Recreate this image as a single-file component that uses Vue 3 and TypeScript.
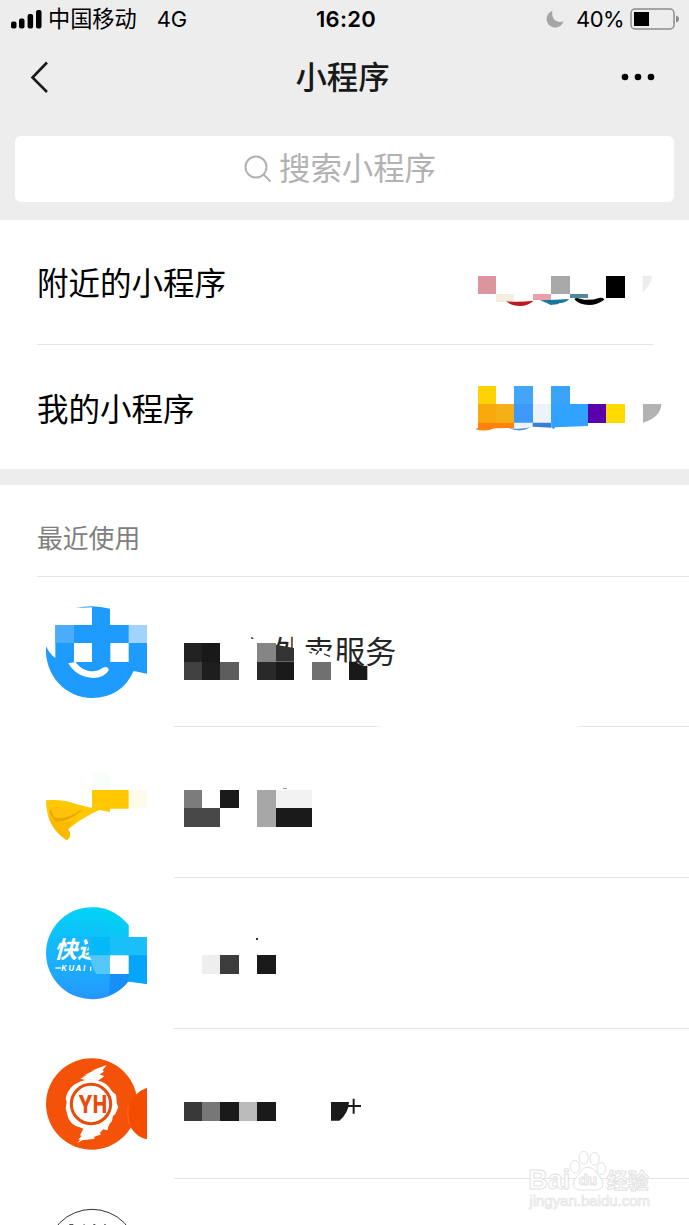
<script setup lang="ts">
type Cell = [x: number, y: number, w: number, h: number, fill: string]

interface RecentApp {
  id: string
  height: number
  iconTop: number
  titleLeft: number
  titleTop: number
  cells: Cell[]
}

// Drawings use three units per pixel.
const nearbyCells: Cell[] = [
  [54, 47, 54, 55, '#dc949f'],
  [108, 102, 55, 23, '#f3eee0'],
  [219, 102, 54, 19, '#eaa0ab'],
  [273, 47, 56, 55, '#a8a8a8'],
  [329, 102, 55, 13, '#4d8b9b'],
  [438, 47, 56, 67, '#000000'],
]

const mineCells: Cell[] = [
  [54, 47, 54, 55, '#ffd303'],
  [54, 102, 54, 56, '#f9a90c'],
  [108, 102, 55, 56, '#f4b016'],
  [163, 47, 55, 55, '#42a5fa'],
  [163, 102, 55, 56, '#3f99fa'],
  [218, 102, 56, 56, '#ecf3fd'],
  [274, 47, 55, 56, '#39a2fb'],
  [274, 102, 110, 56, '#2fa3ff'],
  [384, 102, 55, 56, '#5b00ad'],
  [439, 102, 55, 56, '#ffdb00'],
]

const recentApps: RecentApp[] = [
  {
    id: 'delivery',
    height: 150,
    iconTop: -54,
    titleLeft: 12,
    titleTop: -129,
    cells: [
      [42, 69, 54, 56, '#222222'],
      [96, 69, 54, 56, '#191919'],
      [42, 125, 54, 55, '#414141'],
      [96, 125, 54, 55, '#1e1e1e'],
      [150, 125, 57, 55, '#5d5d5d'],
      [261, 69, 57, 56, '#858585'],
      [261, 125, 57, 55, '#292929'],
      [318, 125, 54, 55, '#1a1a1a'],
      [427, 125, 56, 55, '#707070'],
    ],
  },
  {
    id: 'yellow',
    height: 151,
    iconTop: -99,
    titleLeft: 432,
    titleTop: -99,
    cells: [
      [461, 90, 55, 55, '#7b7b7b'],
      [571, 90, 56, 55, '#1a1a1a'],
      [461, 145, 110, 56, '#484848'],
      [681, 90, 56, 111, '#a7a7a7'],
      [737, 90, 110, 55, '#f2f2f2'],
      [737, 145, 110, 56, '#1a1a1a'],
      [760, 83, 10, 3, '#a0a0a0'],
    ],
  },
  {
    id: 'express',
    height: 151,
    iconTop: -51,
    titleLeft: 432,
    titleTop: -51,
    cells: [
      [516, 181, 55, 56, '#eeeeee'],
      [571, 181, 56, 56, '#3c3c3c'],
      [681, 181, 57, 56, '#1a1a1a'],
      [677, 129, 7, 6, '#333333'],
      [634, 131, 5, 2, '#bbbbbb'],
    ],
  },
  {
    id: 'yh',
    height: 150,
    iconTop: -48,
    titleLeft: 12,
    titleTop: -153,
    cells: [
      [42, 66, 54, 56, '#393939'],
      [96, 66, 54, 56, '#777777'],
      [150, 66, 57, 56, '#1a1a1a'],
      [207, 66, 54, 56, '#bbbbbb'],
      [261, 66, 57, 56, '#1a1a1a'],
    ],
  },
  { id: 'outline', height: 46, iconTop: 402, titleLeft: 12, titleTop: 0, cells: [] },
]
</script>

<template>
  <main class="screen">
    <header class="top">
      <div class="status">
        <div class="status-left">
          <svg class="signal" width="31" height="19" viewBox="0 0 31 19">
            <rect x="0" y="11.500" width="5.500" height="7" rx="2" />
            <rect x="8" y="8.500" width="5.500" height="10" rx="2" />
            <rect x="16.600" y="4" width="5.500" height="14.500" rx="2" />
            <rect x="25" y="0" width="5.500" height="18.500" rx="2" />
          </svg>
          <span class="carrier">中国移动</span>
          <span class="network">4G</span>
        </div>
        <span class="clock">16:20</span>
        <div class="status-right">
          <svg class="moon" width="18" height="18" viewBox="0 0 18 18">
            <path d="M6.500 .8A8.600 8.600 0 1 0 17.500 11.200C12 14 4.500 9.500 6.500 .8Z" fill="#a5a5a5" />
          </svg>
          <span class="percent">40%</span>
          <svg class="battery" width="50" height="22" viewBox="0 0 50 22">
            <rect x="1" y="1" width="43" height="20" rx="4" fill="none" stroke="#8c8c8c" stroke-width="1.500" />
            <rect x="4" y="4" width="15" height="14" />
            <path d="M46 7.500Q49 8.500 49 11T46 14.500Z" fill="#8c8c8c" />
          </svg>
        </div>
      </div>
      <nav class="nav">
        <svg class="back" width="20" height="34" viewBox="0 0 20 34">
          <path d="M18 2.500L3.500 17.500l14.500 14.500" fill="none" stroke="#191919" stroke-width="2.600" />
        </svg>
        <h1>小程序</h1>
        <svg class="more" width="34" height="8" viewBox="0 0 34 8">
          <circle cx="4" cy="4" r="3.300" />
          <circle cx="17" cy="4" r="3.300" />
          <circle cx="30" cy="4" r="3.300" />
        </svg>
      </nav>
      <div class="search">
        <svg width="28" height="28" viewBox="0 0 28 28" fill="none" stroke="#b2b2b2" stroke-width="2">
          <circle cx="12" cy="12" r="10.500" />
          <path d="M19.500 19.500L26.500 26.500" />
        </svg>
        <span>搜索小程序</span>
      </div>
    </header>

    <section class="shortcuts">
      <div class="shortcut nearby">
        <span>附近的小程序</span>
        <svg width="229" height="126" viewBox="0 -120 687 378">
          <g shape-rendering="crispEdges">
            <rect v-for="(c, i) in nearbyCells" :key="i" :x="c[0]" :y="c[1]" :width="c[2]" :height="c[3]" :fill="c[4]" />
          </g>
          <path d="M138 124Q180 127 221 122Q203 138 180 138Q156 138 138 124Z" fill="#bf1824" />
          <path d="M240 121Q286 119 328 117Q314 130 300 129L291 133L272 135L262 130Z" fill="#19779c" />
          <path d="M343 118Q348 111 360 116Q387 124 417 114Q430 111 433 119Q411 135 387 135Q358 135 343 118Z" />
          <path d="M548 47H576Q572 75 548 97Z" fill="#ececec" />
        </svg>
      </div>
      <div class="shortcut mine">
        <span>我的小程序</span>
        <svg width="229" height="123" viewBox="0 -72 687 369">
          <g shape-rendering="crispEdges">
            <rect v-for="(c, i) in mineCells" :key="i" :x="c[0]" :y="c[1]" :width="c[2]" :height="c[3]" :fill="c[4]" />
          </g>
          <path d="M54 158H163V174L105 175Q75 187 46 178L54 173Z" fill="#ff830b" />
          <path d="M145 174Q177 180 213 171Q180 190 145 174Z" fill="#5793dc" />
          <path d="M163 158H218V171L163 173Z" fill="#edf6ff" />
          <path d="M218 158H274V173L218 170Z" fill="#3b7ed6" />
          <path d="M274 158H384V168L286 172L281 178L274 172Z" fill="#2fa3ff" />
          <path d="M549 102H604Q602 142 549 158Z" fill="#b2b2b2" />
        </svg>
      </div>
    </section>

    <section class="recent">
      <h2>最近使用</h2>
      <div v-for="app in recentApps" :key="app.id" class="app" :class="app.id" :style="{ height: app.height + 'px' }">
        <svg class="icon" width="174" :height="app.height" :viewBox="`-90 ${app.iconTop} 522 ${app.height * 3}`">
          <g v-if="app.id === 'delivery'">
            <path d="M138 39Q188 27 240 41V90H351V236L311 228Q275 308 186 309C107 309 43 242 48 154Q58 176 76 189V90H186V37Z" fill="#1d9bff" />
            <rect x="76" y="90" width="56" height="54" fill="#4bacfb" />
            <rect x="296" y="90" width="55" height="54" fill="#a0d3fd" />
            <rect x="132" y="144" width="54" height="57" fill="#fff" />
            <rect x="241" y="144" width="55" height="57" fill="#fff" />
            <path d="M115 205L137 201Q150 222 177 228Q200 232 217 219Q235 211 236 226Q225 247 191 249Q139 247 115 205Z" fill="#fff" />
            <path d="M142 204L186 201V212Q158 217 142 204Z" fill="#1d9bff" />
          </g>
          <g v-else-if="app.id === 'yellow'">
            <rect x="188" y="37" width="51" height="53" fill="#fafefb" />
            <rect x="296" y="90" width="55" height="55" fill="#fffbea" />
            <path d="M48 121Q95 116 138 132L186 144V90H296V146H240V156L208 150Q154 174 115 208L120 218L119 232L110 241Q49 203 48 121Z" fill="#ffc800" />
            <path d="M58 154Q70 136 100 147Q130 158 157 150Q117 185 80 186Q64 178 58 154Z" fill="#efa500" />
            <path d="M62 149Q79 138 107 145Q135 151 151 151Q101 185 72 170Z" fill="#ffc20a" />
            <path d="M52 160Q64 208 110 241L119 232L120 218L113 207Q121 192 140 177Q112 190 80 186Q62 180 52 160Z" fill="#fbb900" />
          </g>
          <g v-else-if="app.id === 'express'">
            <defs>
              <linearGradient id="expressBlue" x1="0" y1="0" x2="0" y2="1">
                <stop offset="0" stop-color="#00d2f7" />
                <stop offset=".55" stop-color="#1bb5fd" />
                <stop offset="1" stop-color="#2795ff" />
              </linearGradient>
              <clipPath id="expressName">
                <path d="M60 120H176V184L186 196H60Z" />
              </clipPath>
            </defs>
            <path d="M296 91A138 138 0 1 0 296 258L351 267V126H296Z" fill="url(#expressBlue)" />
            <path d="M48 169Q52 133 75 128Q130 114 186 128V181H240V292A138 138 0 0 1 48 169Z" fill="#16a9fc" opacity=".22" />
            <path d="M200 36Q255 43 296 91V126H240V84Q204 90 200 36Z" fill="#00d5ee" opacity=".35" />
            <rect x="186" y="126" width="54" height="55" fill="#05b8f8" />
            <rect x="240" y="126" width="111" height="55" fill="#1abff9" />
            <path d="M296 181H351V267L240 253V237H296Z" fill="#05a5fc" />
            <path d="M240 237H296V258Q270 292 235 301Q240 280 240 237Z" fill="#168ff7" />
            <path d="M172 181H240V237H199Q190 226 186 207Z" fill="#54c7fb" />
            <rect x="240" y="181" width="56" height="56" fill="#fff" />
            <g clip-path="url(#expressName)">
              <text transform="translate(71 188) skewX(-16)" class="express-name">快递</text>
            </g>
            <path d="M76 219H93" stroke="#fff" stroke-width="4" />
            <text x="94" y="228" class="kuai">KUAI</text>
            <path d="M182 215V228" stroke="#fff" stroke-width="4" />
          </g>
          <g v-else-if="app.id === 'yh'">
            <circle cx="185" cy="177" r="137" fill="#f35208" />
            <path d="M351 128V283Q322 278 304 250Q289 221 292 188Q313 141 351 128Z" fill="#f44d00" />
            <path d="M295 180Q290 215 299 238" fill="none" stroke="#ff7844" stroke-width="2" />
            <path d="M151 101L174 88L159 92L196 74L183 77L230 60L218 75L222 80L209 88L223 94L204 107Q232 112 246 139L258 149L261 177L265 187L256 207L249 213L246 228Q234 239 233 256L220 253L209 264L214 268L191 276L195 281L157 286L141 295L151 284L145 284L155 272L150 271L160 251L149 247Q117 238 112 209L107 190L110 171L107 159Q115 124 149 110L165 105Z" fill="#fff" />
            <circle cx="183" cy="177" r="59" fill="#fff" stroke="#e94b0b" stroke-width="9" />
            <text x="188" y="205" text-anchor="middle" textLength="86" lengthAdjust="spacingAndGlyphs" class="yh-mark">YH</text>
          </g>
          <g v-else fill="none" stroke="#333" stroke-width="3">
            <circle cx="186" cy="629" r="136" />
            <path d="M118 539H130M160 540H165M190 539H196M223 538L229 541" stroke-width="3" />
          </g>
        </svg>
        <div class="title">
          <svg width="515" :height="app.height" :viewBox="`${app.titleLeft} ${app.titleTop} 1545 ${app.height * 3}`">
            <g v-if="app.id === 'delivery'">
              <text x="307" y="130" class="service">外卖服务</text>
              <path d="M295 40H316V138H295ZM368 40H400V138H368ZM318 90H400V145H318ZM400 93H495V145H400ZM495 120L537 130V145H495Z" fill="#fff" />
              <path d="M418 96L426 99M446 93L438 104M462 102L480 109" stroke="#252525" stroke-width="4" />
              <path d="M318 74L372 84V125H318Z" fill="#333" />
              <path d="M537 125H555L578 138L592 137V180H537Z" fill="#191919" />
              <path d="M243 53L250 56" stroke="#333" stroke-width="4" />
            </g>
            <g shape-rendering="crispEdges">
              <rect v-for="(c, i) in app.cells" :key="i" :x="c[0]" :y="c[1]" :width="c[2]" :height="c[3]" :fill="c[4]" />
            </g>
            <g v-if="app.id === 'yh'">
              <path d="M483 66H537Q535 101 508 122H483Z" fill="#1a1a1a" />
              <path d="M530 78H573M551 56V101" stroke="#1a1a1a" stroke-width="6" />
            </g>
          </svg>
        </div>
      </div>
    </section>

    <svg class="watermark" width="179" height="90" viewBox="0 0 537 270">
      <g fill="#fff" fill-opacity=".85" stroke="#e2e2e2" stroke-width="3">
        <ellipse cx="195" cy="95" rx="14" ry="19" />
        <ellipse cx="221" cy="68" rx="14" ry="19" />
        <ellipse cx="254" cy="71" rx="14" ry="19" />
        <ellipse cx="274" cy="101" rx="13" ry="18" />
        <path d="M234 97Q253 98 261 116Q284 137 277 157Q264 169 234 164Q203 169 192 157Q184 139 208 116Q216 97 234 97Z" />
        <text x="55" y="163" textLength="126" lengthAdjust="spacingAndGlyphs" class="wm-name">Bai</text>
        <text x="206" y="151" textLength="55" lengthAdjust="spacingAndGlyphs" class="wm-du">du</text>
        <text x="290" y="159" class="wm-cn">经验</text>
        <text x="58" y="212" textLength="362" lengthAdjust="spacingAndGlyphs" stroke-width="2" class="wm-url">jingyan.baidu.com</text>
      </g>
    </svg>
  </main>
</template>

<style>
body {
  overflow: hidden;
  background: #fff;
}
</style>

<style scoped>
* {
  box-sizing: border-box;
}

.screen {
  position: relative;
  width: 689px;
  height: 1225px;
  overflow: hidden;
  background: #fff;
  color: #191919;
  font-family: Inter, "Noto Sans CJK SC", sans-serif;
}

svg {
  display: block;
  flex: none;
}

.top {
  height: 220px;
  background: #ededed;
}

.status {
  display: grid;
  grid-template-columns: 1fr auto 1fr;
  align-items: center;
  height: 38px;
  padding: 0 10px 0 11px;
  color: #000;
  font-size: 22px;
  line-height: 38px;
}

.status-left,
.status-right {
  display: flex;
  align-items: center;
}

.status-right {
  justify-content: flex-end;
}

.carrier {
  margin-left: 6px;
  font-size: 22.2px;
}

.network {
  margin-left: 20px;
  letter-spacing: -0.2px;
}

.clock {
  padding-left: 2px;
  font-weight: 600;
  letter-spacing: 0.3px;
}

.percent {
  margin: 0 6px 0 12px;
  letter-spacing: -0.6px;
}

.battery {
  margin-right: -1px;
}

.nav {
  display: grid;
  grid-template-columns: 1fr auto 1fr;
  align-items: center;
  height: 78px;
  padding: 0 34px 0 29px;
}

.nav h1 {
  margin: 0;
  padding-left: 1px;
  font-size: 31.4px;
  font-weight: 500;
  line-height: 80px;
  height: 78px;
}

.more {
  justify-self: end;
}

.search {
  display: flex;
  align-items: center;
  justify-content: center;
  gap: 7px;
  height: 66px;
  margin: 20px 15px 0;
  padding-right: 9px;
  border-radius: 6px;
  background: #fff;
  color: #b2b2b2;
  font-size: 31.4px;
  font-weight: 400;
  line-height: 64px;
}

.search svg {
  margin-top: -1px;
}

.search span {
  padding-bottom: 1px;
}

.shortcuts {
  border-bottom: 16px solid #ededed;
}

.shortcut {
  display: flex;
  justify-content: space-between;
  padding-left: 37px;
  font-size: 31.5px;
  color: #000;
}

.nearby {
  height: 126px;
  line-height: 128px;
  background: linear-gradient(#e4e4e4, #e4e4e4) 37px 124px / 616px 1px no-repeat;
}

.mine {
  height: 123px;
  line-height: 127px;
}

.recent h2 {
  height: 92px;
  margin: 0 0 0 37px;
  border-bottom: 1px solid #e4e4e4;
  color: #7f7f7f;
  font-size: 25.8px;
  font-weight: 400;
  line-height: 107px;
}

.app {
  display: flex;
  overflow: hidden;
}

.title {
  border-bottom: 1px solid #e5e5e5;
}

.delivery .title {
  border: 0;
  background: linear-gradient(90deg, #e5e5e5 0 200px, #fff 209px 400px, #e5e5e5 408px) 0 149px / 515px 1px no-repeat;
}

.outline .title {
  border: 0;
}

.service {
  font-size: 93px;
  fill: #252525;
}

.kuai {
  fill: #fff;
  font: italic 700 23px Inter, sans-serif;
  letter-spacing: 5px;
}

.express-name {
  fill: #fff;
  font: 700 70px "Noto Sans CJK SC", sans-serif;
}

.yh-mark {
  fill: #e94b0b;
  font: 800 73px Inter, sans-serif;
}

.watermark {
  position: absolute;
  left: 510px;
  top: 1135px;
}

.wm-name {
  font: 700 84px "Liberation Sans", sans-serif;
}

.wm-du {
  font: 700 46px "Liberation Sans", sans-serif;
}

.wm-cn {
  font: 700 63px "Noto Sans CJK SC", sans-serif;
}

.wm-url {
  font: 400 42px "Liberation Sans", sans-serif;
}
</style>
